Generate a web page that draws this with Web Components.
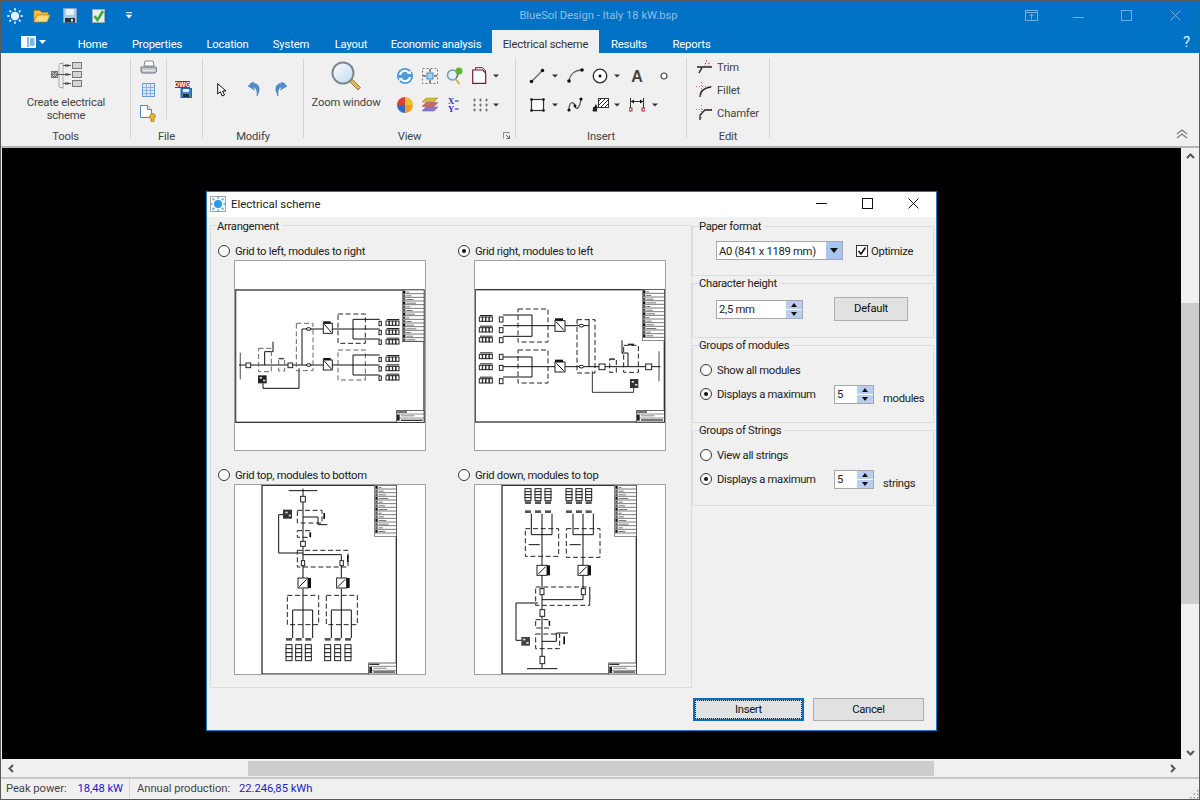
<![CDATA[<!DOCTYPE html>
<html><head><meta charset="utf-8"><title>BlueSol Design</title>
<style>
html,body{margin:0;padding:0;width:1200px;height:800px;overflow:hidden;background:#f0f0f0}
body{font:11.25px/14px Roboto,"Noto Sans",sans-serif;letter-spacing:-.16px;color:#333}
</style></head><body>
<bs-app></bs-app>
<script>
const sunRays=(c,w)=>{let s='';for(let i=0;i<8;i++){const a=i*Math.PI/4,x=Math.cos(a),y=Math.sin(a);s+=`<line x1="${(8+x*5.5).toFixed(1)}" y1="${(8+y*5.5).toFixed(1)}" x2="${(8+x*7.8).toFixed(1)}" y2="${(8+y*7.8).toFixed(1)}" stroke="${c}" stroke-width="${w}"/>`}return s};
const ICONS={
sun:[16,16,sunRays('#fff',1.6)+'<circle cx="8" cy="8" r="4.2" fill="#e6f4ff"/>'],
dsun:[16,16,'<rect x=".5" y=".5" width="15" height="15" fill="#f4f7f8" stroke="#a8a8a8"/>'+sunRays('#3fa4e6',1.4)+'<circle cx="8" cy="8" r="4" fill="#2b9be8"/>'],
folder:[18,14,'<path d="M1 3V1.5h6l1.5 2H15V6H4L1 13z" fill="#f2c244" stroke="#b88718" stroke-width=".7"/><path d="M1 13 4 6h13l-3 7z" fill="#fbdc78" stroke="#b88718" stroke-width=".7"/>'],
save:[14,15,'<path d="M.5.5h13v14H.5z" fill="#a9c9e8" stroke="#7fa4c8"/><rect x="3" y="1" width="8" height="6" fill="#e9f1f8"/><rect x="2" y="10" width="10" height="4.5" fill="#243240"/><rect x="8" y="11" width="2" height="2.5" fill="#ddd"/>'],
check:[13,14,'<rect x=".5" y=".5" width="12" height="13" fill="#e8eef0" stroke="#9ab"/><path d="M2.5 7 5.5 11 11 2" fill="none" stroke="#3eaa3c" stroke-width="2.6"/>'],
qat:[8,7,'<path d="M1 .7h6" stroke="#fff" fill="none"/><path d="M.8 2.8h6.4L4 6.4z" fill="#fff"/>'],
menu:[15,12,'<rect width="15" height="12" rx="1" fill="#fff"/><rect x="6.5" y="1" width="1" height="10" fill="#0072c6"/><path d="M9 3h4.500M9 5h4.500M9 7h4.500M9 9h4.500" stroke="#0072c6"/>'],
tri:[7,4,'<path d="M0 0h7L3.500 4z" fill="#fff"/>'],
dd:[6,4,'<path d="M0 .5h6L3 3.500z" fill="#333"/>'],
schemeBig:[31,30,'<g fill="none" stroke="#8a8a8a"><path d="M8 3.500V26M8.500 2.500H12M8.500 26.500H12" stroke="#a5a5a5"/><path d="M12 1V28" stroke="#aaa"/><path d="M7 13.500H20M12 4.500H20M12 22.500H20" stroke="#555"/><rect x="21.500" y="1.500" width="9" height="6" fill="#d4d4d4" stroke="#777"/><rect x="21.500" y="10.500" width="9" height="6" fill="#d4d4d4" stroke="#777"/><rect x="21.500" y="19.500" width="9" height="6" fill="#d4d4d4" stroke="#777"/></g><rect x="0" y="10" width="7" height="7" fill="#777"/><path d="M1 11l5 5M6 11l-5 5" stroke="#ccc"/><path d="M15 3v3M17 3v3M15 12v3M17 12v3M15 21v3M17 21v3" stroke="#444"/>'],
printer:[17,14,'<path d="M5 1h8l1 5H4z" fill="#fff" stroke="#888"/><path d="M1 7h15l1 4-2 2H2l-1-2z" fill="#c4c8cc" stroke="#6a7078"/><path d="M3 10.500h11" stroke="#eee"/>'],
table:[13,14,'<rect x=".5" y=".5" width="12" height="13" fill="#dbe9f7" stroke="#6e9bd0"/><path d="M4.500 1v12M8.500 1v12M1 4.500h11M1 7.500h11M1 10.500h11" stroke="#8cb3de"/>'],
dockey:[17,17,'<path d="M.5.5h7l4 4v8H.5z" fill="#fff" stroke="#5a86b8"/><path d="M7.500.500v4h4" fill="#dce8f4" stroke="#5a86b8"/><path d="M13 8.500a3 3 0 0 1 1 5.400V16.500h-3V14a3 3 0 0 1 2-5.500z" fill="#e8b530" stroke="#a87a10" stroke-width=".8"/>'],
dwg:[17,17,'<rect width="15" height="7" fill="#b82025"/><text x="7.500" y="6" font-family="Liberation Sans" font-size="6.500" font-weight="700" fill="#fff" text-anchor="middle" letter-spacing="0">DWG</text><rect x="6" y="7.500" width="10.500" height="9" fill="#3c86c8" stroke="#25669e"/><rect x="8" y="8" width="6" height="3" fill="#dfeefa"/><rect x="8" y="13" width="6" height="3" fill="#1e2e3e"/>'],
cursor:[10,14,'<path d="M.7.7V11l2.600-2.300L5.200 13l2.300-1L5.600 8H9z" fill="#fff" stroke="#111"/>'],
undo:[13,16,'<path d="M2 3C8 1 12 4 11 10L9 15C9.500 9 8 6 5 6L6.500 9 0 5 6 1z" fill="#4e8ed4" stroke="#30689f" stroke-width=".5"/>'],
redo:[13,16,'<path d="M11 3C5 1 1 4 2 10L4 15C3.500 9 5 6 8 6L6.500 9 13 5 7 1z" fill="#4e8ed4" stroke="#30689f" stroke-width=".5"/>'],
zoom:[30,30,'<defs><linearGradient id="g" x1="0" y1="0" x2="1" y2="1"><stop offset="0" stop-color="#fff"/><stop offset="1" stop-color="#bcd9ee"/></linearGradient></defs><path d="M18 20l9 9 2.500-2.500-9-9z" fill="#d9b65c" stroke="#9a8238"/><circle cx="12" cy="12" r="10.500" fill="url(#g)" stroke="#7d8890" stroke-width="2"/>'],
refresh:[18,18,'<circle cx="9" cy="9" r="8" fill="#4d9bdc"/><path d="M4 8a5 5 0 0 1 9-2M14 10a5 5 0 0 1-9 2" fill="none" stroke="#fff" stroke-width="2"/><path d="M11 7h4V3zM7 11H3v4z" fill="#fff"/>'],
fit:[16,16,'<rect x=".5" y=".5" width="15" height="15" fill="none" stroke="#777" stroke-dasharray="2 2"/><rect x="5" y="5" width="6" height="6" fill="#a8d2f0" stroke="#3d8bc8"/><path d="M8 1v3M8 12v3M1 8h3M12 8h3" stroke="#222"/>'],
zpin:[18,18,'<circle cx="6.500" cy="8" r="5" fill="#e2f0fa" stroke="#7d96aa" stroke-width="1.500"/><path d="M9.500 12l4 5" stroke="#d2b050" stroke-width="2"/><circle cx="13" cy="4" r="3.500" fill="#5fb432"/><path d="M12.500 7 10 11" stroke="#557" /> '],
page:[15,17,'<path d="M.7 3h10l3 3v10.300H.7z" fill="#fff" stroke="#7a1c2a" stroke-width="1.200"/><path d="M3.500 3V.7h7l3 3V6" fill="none" stroke="#7a1c2a"/>'],
pie:[16,16,'<path d="M8 8V0a8 8 0 0 1 8 8z" fill="#e8c42c"/><path d="M8 8h8a8 8 0 0 1-8 8z" fill="#f0a020"/><path d="M8 8v8a8 8 0 0 1-8-8z" fill="#2e6fc4"/><path d="M8 8H0a8 8 0 0 1 8-8z" fill="#d8403c"/>'],
layers:[16,15,'<path d="M4 1h12l-4 4H0z" fill="#d8b848" stroke="#a08428" stroke-width=".5"/><path d="M4 5.500h12l-4 4H0z" fill="#cc6a60" stroke="#a04840" stroke-width=".5"/><path d="M4 10h12l-4 4H0z" fill="#9078c8" stroke="#6a58a0" stroke-width=".5"/>'],
xy:[14,16,'<text font-family="Liberation Serif" font-size="8.500" font-weight="700" fill="#3030c0" letter-spacing="0"><tspan x="0" y="7">X=</tspan><tspan x="0" y="15">Y=</tspan></text>'],
dots:[16,14,'<path d="M1 2h3M2.500 .5v3M7 2h3M8.500 .5v3M13 2h3M14.500 .5v3M1 7h3M2.500 5.500v3M7 7h3M8.500 5.500v3M13 7h3M14.500 5.500v3M1 12h3M2.500 10.500v3M7 12h3M8.500 10.500v3M13 12h3M14.500 10.500v3" stroke="#777"/>'],
launch:[7,7,'<path d="M.5 6.500V.5h6" fill="none" stroke="#888"/><path d="M3 3l3.500 3.500M6.500 3.500v3h-3" fill="none" stroke="#666"/>'],
line:[16,16,'<path d="M2.500 13.500 13.500 2.500" stroke="#666" stroke-width="1.300"/><circle cx="2.500" cy="13.500" r="1.800" fill="#111"/><circle cx="13.500" cy="2.500" r="1.800" fill="#111"/>'],
arc:[17,15,'<path d="M2 13C3 6 8 2 15 2" stroke="#666" stroke-width="1.300" fill="none"/><circle cx="2" cy="13" r="1.800" fill="#111"/><circle cx="15" cy="2" r="1.800" fill="#111"/>'],
circle:[16,16,'<circle cx="8" cy="8" r="6.800" fill="#fff" stroke="#333" stroke-width="1.300"/><circle cx="8" cy="8" r="1.500" fill="#111"/>'],
bigA:[14,18,'<text x="7" y="15" font-family="Liberation Sans" font-size="16" font-weight="700" fill="#444" text-anchor="middle" letter-spacing="0">A</text>'],
point:[8,8,'<circle cx="4" cy="4" r="3" fill="#fff" stroke="#444" stroke-width="1.200"/>'],
rect:[15,14,'<rect x="1.500" y="1.500" width="12" height="11" fill="#fff" stroke="#333" stroke-width="1.200"/><circle cx="1.500" cy="1.500" r="1.300" fill="#111"/><circle cx="13.500" cy="1.500" r="1.300" fill="#111"/><circle cx="1.500" cy="12.500" r="1.300" fill="#111"/><circle cx="13.500" cy="12.500" r="1.300" fill="#111"/>'],
spline:[16,15,'<path d="M2 13C2 4 7 4 8 9S13 11 14 2" fill="none" stroke="#555" stroke-width="1.300"/><circle cx="2" cy="13" r="1.600" fill="#111"/><circle cx="14" cy="2" r="1.600" fill="#111"/><circle cx="8" cy="9" r="1.400" fill="#111"/>'],
hatch:[17,14,'<rect x="6.500" y=".5" width="10" height="9" fill="#fff" stroke="#333"/><path d="M7 3l3-3M7 7l7-7M9 9l7-7M13 9l3-3" stroke="#333"/><path d="M0 13 4 6l2 4z" fill="#222"/><rect x="1" y="9" width="4" height="4.500" fill="#222"/>'],
dim:[16,15,'<path d="M1.500 1v10M14.500 1v10M2 4.500h12" stroke="#333" fill="none"/><path d="M2 4.500 5 2.500v4zM14 4.500 11 2.500v4z" fill="#111"/><rect x="0" y="11" width="3" height="3" fill="none" stroke="#b02020"/><rect x="13" y="11" width="3" height="3" fill="none" stroke="#b02020"/>'],
trim:[17,15,'<path d="M1 8h15" stroke="#222" stroke-width="1.500"/><path d="M3 14 6 8.500" stroke="#222" stroke-width="1.500"/><path d="M8 8 11 1M13 8v-5" stroke="#b03030" stroke-dasharray="1.500 1.500" fill="none"/>'],
fillet:[17,16,'<path d="M0 4.500h16M5.500 0v15" stroke="#c07070" stroke-dasharray="1 2" fill="none"/><path d="M4 15C4 9 7 6 15 5" stroke="#222" stroke-width="1.300" fill="none"/>'],
chamfer:[17,16,'<path d="M0 4.500h16M5.500 0v15" stroke="#c07070" stroke-dasharray="1 2" fill="none"/><path d="M4 15V10L9 5h7" stroke="#222" stroke-width="1.300" fill="none"/>'],
wrestore:[13,11,'<rect x=".5" y=".5" width="12" height="10" fill="none" stroke="#6fb0e4"/><path d="M.5 2.500h12M6.500 9.500V4M4.500 6l2-2 2 2" stroke="#6fb0e4" fill="none"/>'],
wmin:[11,11,'<path d="M0 7.500h11" stroke="#6fb0e4"/>'],
wmax:[11,11,'<rect x=".5" y=".5" width="10" height="10" fill="none" stroke="#6fb0e4"/>'],
wclose:[11,11,'<path d="M.5.5l10 10M10.500.5l-10 10" stroke="#6fb0e4"/>'],
dmin:[11,11,'<path d="M0 5.500h11" stroke="#111"/>'],
dmax:[11,11,'<rect x=".5" y=".5" width="10" height="10" fill="none" stroke="#111"/>'],
dclose:[11,11,'<path d="M.5.5l10 10M10.500.5l-10 10" stroke="#111"/>'],
ribup:[12,10,'<path d="M1 5 6 1l5 4M1 9 6 5l5 4" fill="none" stroke="#777" stroke-width="1.200"/>'],
chU:[9,6,'<path d="M1 5 4.500 1.500 8 5" fill="none" stroke="#555" stroke-width="2"/>'],
chD:[9,6,'<path d="M1 1 4.500 4.500 8 1" fill="none" stroke="#555" stroke-width="2"/>'],
chL:[6,9,'<path d="M5 1 1.500 4.500 5 8" fill="none" stroke="#555" stroke-width="2"/>'],
chR:[6,9,'<path d="M1 1 4.500 4.500 1 8" fill="none" stroke="#555" stroke-width="2"/>'],
grip:[10,10,'<path d="M8 1h1.500v1.500H8zM4.500 4.500H6V6H4.500zM8 4.500h1.500V6H8zM1 8h1.500v1.500H1zM4.500 8H6v1.500H4.500zM8 8h1.500v1.500H8z" fill="#999"/>']
};
const def=(n,html,init)=>customElements.define(n,class extends HTMLElement{
 connectedCallback(){if(this.shadowRoot)return;const r=this.attachShadow({mode:'open'});r.innerHTML=typeof html==='function'?html(this):html;}
});
def('ui-icon',e=>{const [w,h,s]=ICONS[e.getAttribute('n')];
 return `<style>:host{display:inline-flex;align-items:center;justify-content:center;flex:none;line-height:0}</style><svg xmlns="http://www.w3.org/2000/svg" width="${w}" height="${h}" viewBox="0 0 ${w} ${h}">${s}</svg>`});
def('ui-radio',e=>`<style>:host{display:flex;align-items:center;gap:5px;height:20px;white-space:nowrap;color:#222}
slot{display:block;padding-top:2px}
i{width:12px;height:12px;box-sizing:border-box;border:1px solid #333;border-radius:50%;background:#fff;display:flex;align-items:center;justify-content:center;flex:none}
b{width:4px;height:4px;border-radius:50%;background:#111}</style><i>${e.hasAttribute('checked')?'<b></b>':''}</i><slot></slot>`);
const arrows=`<span class="ar"><u class="up"></u><u class="dn"></u></span>`;
def('ui-spin',e=>`<style>:host{display:flex;box-sizing:border-box;width:${e.getAttribute('w')}px;height:19px;border:1px solid #a8a8a8;background:#fff;color:#222;align-items:center;padding-left:2px;flex:none}
span.t{flex:1;white-space:nowrap;padding-top:2px}.ar{width:16px;height:17px;display:flex;flex-direction:column;gap:1px}
u{flex:1;background:#b8cdf0;display:flex;align-items:center;justify-content:center;text-decoration:none}
u::before{content:"";border-left:3.5px solid transparent;border-right:3.5px solid transparent}
.up::before{border-bottom:4px solid #111}.dn::before{border-top:4px solid #111}</style><span class="t">${e.getAttribute('v')}</span>${arrows}`);
def('ui-combo',e=>`<style>:host{display:flex;box-sizing:border-box;width:127px;height:19px;border:1px solid #a8a8a8;background:#fff;align-items:center;padding-left:2px;color:#222;flex:none}
span{flex:1;white-space:nowrap;padding-top:2px}u{width:16px;height:17px;background:#a8c4f0;display:flex;align-items:center;justify-content:center}
u::before{content:"";border:4px solid transparent;border-top:5px solid #111;border-bottom:0}</style><span><slot></slot></span><u></u>`);
def('ui-check',e=>`<style>:host{display:flex;align-items:center;gap:3px;color:#222;white-space:nowrap}
slot{display:block;padding-top:2px}
i{width:12px;height:12px;box-sizing:border-box;border:1px solid #333;background:#fff;line-height:0}</style><i><svg width="10" height="10" viewBox="0 0 10 10"><path d="M1.500 5 4 8 8.500 1.500" fill="none" stroke="#111" stroke-width="1.600"/></svg></i><slot></slot>`);
def('ui-btn',e=>`<style>:host{display:flex;box-sizing:border-box;align-items:center;justify-content:center;background:#e1e1e1;border:1px solid #adadad;color:#111;flex:none;position:relative}
:host([focus]){border:2px solid #0a6cc4}
:host([focus])::after{content:"";position:absolute;inset:0;border:1px dotted #111}</style><slot></slot>`);
def('group-box',e=>`<style>:host{display:block;box-sizing:border-box;border:1px solid #dcdcdc}
.lg{display:table;margin:var(--lg,-8px) 0 -1px 6px;height:15px;padding-top:1px;box-sizing:border-box;background:#f0f0f0;color:#222;padding-right:3px;white-space:nowrap}</style><div class="lg">${e.getAttribute('label')}</div><slot></slot>`);
/* diagrams: coordinates in 3x pixels */
const L=(d,c='#111',w=3)=>`<path d="${d}" fill="none" stroke="${c}" stroke-width="${w}"/>`;
const D=(x,y,w,h,c='#222')=>`<rect x="${x}" y="${y}" width="${w}" height="${h}" fill="none" stroke="${c}" stroke-width="3" stroke-dasharray="15 8"/>`;
const B=(x,y,w,h,f='#fff')=>`<rect x="${x}" y="${y}" width="${w}" height="${h}" fill="${f}" stroke="#222" stroke-width="3"/>`;
const F=(x,y,w,h,f='#111')=>`<rect x="${x}" y="${y}" width="${w}" height="${h}" fill="${f}"/>`;
const sheet=(x1,y1,x2,y2)=>`<rect x="${x1}" y="${y1}" width="${x2-x1}" height="${y2-y1}" fill="#fff" stroke="#333" stroke-width="4"/>`;
const table=(x1,y1,x2,y2)=>{let s=`<rect x="${x1}" y="${y1}" width="${x2-x1}" height="${y2-y1}" fill="#fff" stroke="#555" stroke-width="2"/>`;
 for(let y=y1+11,i=0;y<y2;y+=11,i++){s+=L(`M${x1} ${y}H${x2}`,'#333',2)+F(x1+2,y-9,7,8,i%3==0?'#111':'#555')+F(x1+12,y-6,8+(i*7%24),3,'#777')}return s};
const tb=(x1,y1,x2,y2)=>`<rect x="${x1}" y="${y1}" width="${x2-x1}" height="${y2-y1}" fill="#fff" stroke="#222" stroke-width="2"/>`+F(x1+2,y1+2,30,4,'#333')+L(`M${x1} ${y1+10}H${x2}M${x1} ${y1+22}H${x2}`,'#555',2)+F(x1+2,y1+12,8,18,'#222')+F(x1+14,y1+14,40,3,'#888')+F(x1+14,y2-8,x2-x1-18,4,'#333');
const inv=(x,y)=>B(x,y,27,30)+L(`M${x+3} ${y+3}L${x+24} ${y+27}`)+F(x,y-6,22,6);
const invV=(x,y)=>B(x,y,30,30)+L(`M${x+4} ${y+26}L${x+26} ${y+4}`)+F(x+30,y,9,30);
const modH=(x,y,n=4)=>{let s=F(x+2,y-6,n*9+2,3,'#222');for(let i=0;i<n;i++)s+=B(x+i*10,y,9,13);return s};
const modV=(x,y,h=48)=>{let s='';const n=4;for(let i=0;i<n;i++)s+=B(x,y+i*h/n,18,h/n);return s};
const thumbs={
d1:['91 213 570 567',sheet(92,300,658,697)+F(90,298,5,400,'#555')+table(593,300,658,455)+tb(575,662,658,697)
 +L('M107 488V568','#777',4)+L('M103 525H355')+B(124,519,14,14)+B(250,519,14,14)+L('M180 525V485H205M205 455V485')+D(162,475,38,70,'#666')
 +F(160,556,26,24,'#222')+F(165,561,7,5,'#ddd')+F(175,569,7,5,'#ddd')+L('M175 580V595H283V535')+D(222,505,18,38,'#666')+F(222,505,16,3,'#333')
 +D(275,400,50,142,'#666')+L('M292 525V417H355')+`<ellipse cx="312" cy="417" rx="7" ry="4" fill="#fff" stroke="#111" stroke-width="3"/><ellipse cx="312" cy="525" rx="7" ry="4" fill="#fff" stroke="#111" stroke-width="3"/>`
 +inv(356,400)+inv(356,510)+D(400,372,82,88)+D(400,480,82,90,'#666')
 +L('M382 417H525M445 388V447M445 388H525M445 447H525M382 525H525M445 495V555M445 495H525M445 555H525')
 +[400,427,456,508,536,564].map(y=>B(523,y-6,7,13)+modH(544,y-7)).join('')],
d2:['76 64 570 567',sheet(76,150,644,547)+F(74,148,5,400,'#555')+table(578,150,644,303)+tb(560,513,644,547)
 +L('M628 335V425','#777',4)+L('M632 381H346')+B(588,373,18,17)+B(448,373,18,17)+D(522,317,44,81)+L('M517 302V340H535V381M517 340H520')+F(535,312,18,5,'#222')
 +F(541,418,25,27,'#333')+F(546,424,7,5,'#ddd')+F(556,433,7,5,'#ddd')+L('M552 445V458H428V395','#333')+D(480,358,20,40)+F(480,357,16,3,'#333')
 +D(382,240,54,160)+L('M418 240V381M346 258H418')+`<ellipse cx="395" cy="258" rx="7" ry="4" fill="#fff" stroke="#111" stroke-width="3"/><ellipse cx="395" cy="381" rx="7" ry="4" fill="#fff" stroke="#111" stroke-width="3"/>`
 +B(316,243,30,32)+L('M320 247L342 271')+F(316,236,24,7)+B(316,367,30,30)+L('M320 371L342 393')+F(316,360,24,7)
 +D(205,208,90,99)+D(205,331,90,99)
 +L('M247 226V290M316 258H160M160 226H247M160 290H247M247 352V412M316 381H160M160 352H247M160 412H247')
 +[240,272,302,352,385,425].map(y=>B(149,y-8,11,15)+modH(89,y-8)).join('')],
d3:['61 61 570 567',sheet(142,62,545,628)+table(480,62,545,215)+tb(462,595,545,628)
 +L('M222 78H308')+L('M265 72V340')+B(258,95,14,17)+F(205,135,27,27,'#333')+F(212,141,7,5,'#ddd')+F(222,150,7,5,'#ddd')+D(248,137,74,38)+L('M265 157H310V180H338')+F(326,145,5,18)
 +D(248,198,40,20)+F(284,203,5,14)+B(258,230,14,15)+L('M205 150H192V265H265')+L('M265 270H380V340')+D(248,257,152,50)+F(397,272,5,20)
 +B(260,288,10,15)+B(376,288,10,15)+invV(250,340)+invV(366,340)+L('M265 372V520M380 372V520')
 +D(218,392,94,88)+D(335,392,93,88)+L('M234 436H294M234 436V520M294 436V520M350 436H410M350 436V520M410 436V520')
 +[214,243,272,330,360,391].map(x=>F(x,520,18,8,'#555')+modV(x,540)).join('')],
d4:['61 61 570 567',sheet(142,62,545,628)+table(480,62,545,215)+tb(462,595,545,628)
 +[211,241,271,334,364,393].map(x=>modV(x,72,36)+F(x,110,18,8,'#555')+F(x,137,18,8,'#555')).join('')
 +L('M230 147V210H292V147M262 147V302M355 147V210H416V147M385 147V302')+D(212,192,100,83)+D(335,192,101,86)
 +L('M222 240H255M345 240H378')+invV(247,302)+invV(370,302)+L('M262 332V610M385 332V405M262 405H385')+D(243,367,162,55)+B(256,372,12,18)+B(380,372,12,18)
 +F(403,368,4,44,'#555')+B(256,435,14,20)+L('M250 415H184V527H200')+F(200,517,26,26,'#444')+F(205,522,7,5,'#ddd')+F(215,532,7,5,'#ddd')
 +D(243,465,42,25)+F(282,468,4,14)+D(243,508,72,44)+L('M262 530H305V505H340')+F(326,515,5,24)+B(256,575,14,22)+L('M217 612H308')]
};
def('scheme-thumb',e=>{const [vb,s]=thumbs[e.getAttribute('k')];return `<style>:host{display:block;width:192px;height:191px;box-sizing:border-box;border:1px solid #a0a0a0;background:#fff;margin-left:16px;line-height:0}</style><svg width="190" height="189" viewBox="${vb}" xmlns="http://www.w3.org/2000/svg">${s}</svg>`});
def('rb-group',e=>`<style>:host{display:grid;grid-template-rows:74px 18px;height:93px;width:${e.getAttribute('w')}px;flex:none;box-sizing:border-box;
 background:linear-gradient(#d4d4d4,#d4d4d4) right 0 top 5px/1px 80px no-repeat;position:relative}
.l{text-align:center;color:#444;line-height:18px;padding:1px 1px 0 0;height:17px}
.c{min-width:0}</style><div class="c"><slot></slot></div><div class="l">${e.getAttribute('label')}<slot name="extra"></slot></div>`);
def('rb-grid',e=>`<style>:host{display:grid;grid-template-columns:${e.getAttribute('c')};grid-auto-rows:29px;align-items:center;justify-items:center}</style><slot></slot>`);
def('rb-tab',e=>`<style>:host{display:flex;align-items:center;justify-content:center;height:23px;width:${e.getAttribute('w')}px;color:#fff;flex:none;white-space:nowrap;padding-top:6px;box-sizing:border-box}
:host([on]){background:#f0f0f0;color:#333}</style><slot></slot>`);
def('bs-ribbon',`<style>:host{display:flex;height:93px;background:#f0f0f0;position:relative;border-bottom:2px solid #b4b4b4;color:#444}
.up{position:absolute;right:11px;bottom:7px}
.big{display:flex;flex-direction:column;align-items:center;text-align:center}
.g{display:flex}
.e{display:flex;align-items:center;height:23px;gap:4px;padding-left:9px}
.e span{color:#444;padding-top:2px}
.launch{position:absolute;right:6px;top:79px}
</style>
<rb-group w="130" label="Tools"><div class="big" style="padding-top:8px"><ui-icon n="schemeBig"></ui-icon><div style="margin-top:5px;line-height:13px">Create electrical<br>scheme</div></div></rb-group>
<rb-group w="72" label="File"><div class="g" style="padding-top:6px"><div style="display:flex;flex-direction:column;align-items:center;width:35px;border-right:1px solid #d4d4d4;height:60px"><ui-icon n="printer" style="margin-top:1px"></ui-icon><ui-icon n="table" style="margin-top:9px"></ui-icon><ui-icon n="dockey" style="margin-top:8px"></ui-icon></div><ui-icon n="dwg" style="margin:22px 0 0 8px;align-self:flex-start"></ui-icon></div></rb-group>
<rb-group w="101" label="Modify"><div class="g" style="padding:29px 0 0 14px"><ui-icon n="cursor"></ui-icon><ui-icon n="undo" style="margin-left:21px;margin-top:-1px"></ui-icon><ui-icon n="redo" style="margin-left:13px;margin-top:-1px"></ui-icon></div></rb-group>
<rb-group w="212" label="View"><div class="g" style="padding-top:8px"><div class="big" style="width:84px"><ui-icon n="zoom"></ui-icon><div style="margin-top:5px;line-height:13px">Zoom window</div></div>
<rb-grid c="25px 25px 25px 25px 8px" style="margin-left:4px"><ui-icon n="refresh"></ui-icon><ui-icon n="fit"></ui-icon><ui-icon n="zpin"></ui-icon><ui-icon n="page"></ui-icon><ui-icon n="dd"></ui-icon><ui-icon n="pie"></ui-icon><ui-icon n="layers"></ui-icon><ui-icon n="xy"></ui-icon><ui-icon n="dots"></ui-icon><ui-icon n="dd"></ui-icon></rb-grid></div>
<div slot="extra" class="launch"><ui-icon n="launch"></ui-icon></div></rb-group>
<rb-group w="171" label="Insert"><rb-grid c="26px 10px 30px 20px 14px 26px 10px 8px" style="padding:8px 0 0 8px"><ui-icon n="line"></ui-icon><ui-icon n="dd"></ui-icon><ui-icon n="arc"></ui-icon><ui-icon n="circle"></ui-icon><ui-icon n="dd"></ui-icon><ui-icon n="bigA"></ui-icon><i></i><ui-icon n="point"></ui-icon>
<ui-icon n="rect"></ui-icon><ui-icon n="dd"></ui-icon><ui-icon n="spline"></ui-icon><ui-icon n="hatch"></ui-icon><ui-icon n="dd"></ui-icon><ui-icon n="dim"></ui-icon><ui-icon n="dd"></ui-icon><i></i></rb-grid></rb-group>
<rb-group w="83" label="Edit"><div style="padding-top:2px"><div class="e"><ui-icon n="trim"></ui-icon><span>Trim</span></div><div class="e"><ui-icon n="fillet"></ui-icon><span>Fillet</span></div><div class="e"><ui-icon n="chamfer"></ui-icon><span>Chamfer</span></div></div></rb-group>
<ui-icon n="ribup" class="up"></ui-icon>`);
def('bs-dialog',`<style>:host{position:absolute;left:204px;top:43px;width:731px;height:540px;box-sizing:border-box;border:1px solid #1a78c8;background:#f0f0f0;color:#222;display:block;font-size:11.25px;letter-spacing:-.3px}
.tb{height:25px;background:#fff;display:flex;align-items:center;padding:0 0 2px 3px;box-sizing:border-box;color:#222}
.tb span{margin-left:5px;flex:1;font-size:11.4px;letter-spacing:0}
.wb{width:46px;display:flex;justify-content:center}
.body{display:grid;grid-template-columns:482px 242px;padding:8px 0 0 3px}
.rt{display:flex;flex-direction:column;margin-top:1px}
.arr{display:grid;grid-template-columns:240px 240px;align-content:start;row-gap:14px;padding:8px 0 0 7px;box-sizing:border-box}
.arr ui-radio{height:19px}
.row{display:flex;align-items:center}
.rad{padding:8px 0 0 7px}
.btns{display:flex;justify-content:flex-end;gap:9px;padding:10px 12px 0 0}
.lab{margin:8px 0 -2px 9px}
.rad ui-radio+div{margin-top:4px}
</style>
<div class="tb"><ui-icon n="dsun"></ui-icon><span>Electrical scheme</span><div class="wb"><ui-icon n="dmin"></ui-icon></div><div class="wb"><ui-icon n="dmax"></ui-icon></div><div class="wb"><ui-icon n="dclose"></ui-icon></div></div>
<div class="body">
<group-box label="Arrangement" style="height:463px;--lg:-7px"><div class="arr">
<div><ui-radio>Grid to left, modules to right</ui-radio><scheme-thumb k="d1"></scheme-thumb></div>
<div><ui-radio checked>Grid right, modules to left</ui-radio><scheme-thumb k="d2"></scheme-thumb></div>
<div><ui-radio>Grid top, modules to bottom</ui-radio><scheme-thumb k="d3"></scheme-thumb></div>
<div><ui-radio>Grid down, modules to top</ui-radio><scheme-thumb k="d4"></scheme-thumb></div>
</div></group-box>
<div class="rt">
<group-box label="Paper format" style="height:50px;margin-bottom:7px"><div class="row" style="padding:8px 0 0 23px;gap:13px"><ui-combo>A0 (841 x 1189 mm)</ui-combo><ui-check>Optimize</ui-check></div></group-box>
<group-box label="Character height" style="height:55px;margin-bottom:7px"><div class="row" style="padding:7px 0 0 23px;gap:31px"><ui-spin w="87" v="2,5 mm"></ui-spin><ui-btn style="width:74px;height:24px">Default</ui-btn></div></group-box>
<group-box label="Groups of modules" style="height:78px;margin-bottom:7px"><div class="rad"><ui-radio>Show all modules</ui-radio><div class="row"><ui-radio checked style="width:134px">Displays a maximum</ui-radio><ui-spin w="40" v="5"></ui-spin><span class="lab">modules</span></div></div></group-box>
<group-box label="Groups of Strings" style="height:76px"><div class="rad"><ui-radio>View all strings</ui-radio><div class="row"><ui-radio checked style="width:134px">Displays a maximum</ui-radio><ui-spin w="40" v="5"></ui-spin><span class="lab">strings</span></div></div></group-box>
</div></div>
<div class="btns"><ui-btn focus style="width:111px;height:23px">Insert</ui-btn><ui-btn style="width:111px;height:23px">Cancel</ui-btn></div>`);
def('bs-app',`<style>:host{display:flex;flex-direction:column;width:1200px;height:800px;box-sizing:border-box;border:1px solid #5a5a5a;background:#f0f0f0}
.title{height:29px;background:#0072c6;display:flex;align-items:center;position:relative;flex:none}
.ttl{flex:1;text-align:center;color:#8ebfe8;padding-right:2px;margin-left:-1px;letter-spacing:-.03px}
.wbtns{position:absolute;right:0;top:0;height:29px;display:flex;align-items:center}
.qat{display:flex;align-items:center;padding-left:6px;width:400px;position:absolute;left:0;top:0;height:29px}
.tabs{height:23px;background:#0072c6;display:flex;flex:none;align-items:flex-end;position:relative}
.mn{width:65px;display:flex;align-items:center;padding-left:20px;gap:3px;box-sizing:border-box;height:23px;flex:none}
.help{position:absolute;right:9px;top:2px;color:#dff0ff;font-size:15px;line-height:20px}
.mid{flex:1;display:flex;min-height:0;padding-left:1px;background:#f0f0f0}
.canvas{flex:1;background:#000;position:relative;margin-bottom:1px}
.vs{width:18px;display:flex;flex-direction:column;align-items:center;padding:5px 0 4px;box-sizing:border-box;justify-content:space-between;flex:none}
.vt{width:18px;height:301px;background:#cdcdcd;position:absolute;right:1px;top:303px}
.hs{height:17px;display:flex;align-items:center;position:relative;flex:none;padding:0 23px 0 7px;justify-content:space-between;box-sizing:border-box}
.ht{position:absolute;left:247px;width:686px;top:1px;height:15px;background:#cdcdcd}
.st{height:20px;border-top:2px solid #c8c8c8;display:flex;align-items:flex-start;flex:none;position:relative;background:#f0f0f0;color:#444;letter-spacing:-.06px}
.st b{font-weight:400;color:#1c1cc8;padding-top:1px}
.st span{padding-top:1px}
.c1{width:129px;height:19px;box-sizing:border-box;border-right:1px solid #d4d4d4;display:flex;align-items:center;padding-left:5px;justify-content:space-between;padding-right:6px}
.c2{display:flex;align-items:center;padding-left:7px;height:19px}
.c2 span{width:102px}
.grip{position:absolute;right:0;bottom:0}
</style>
<div class="title"><div class="qat"><ui-icon n="sun"></ui-icon><ui-icon n="folder" style="margin-left:10px"></ui-icon><ui-icon n="save" style="margin-left:12px"></ui-icon><ui-icon n="check" style="margin-left:15px"></ui-icon><ui-icon n="qat" style="margin-left:20px"></ui-icon></div>
<div class="ttl">BlueSol Design - Italy 18 kW.bsp</div>
<div class="wbtns"><ui-icon n="wrestore" style="margin-right:35px"></ui-icon><ui-icon n="wmin" style="margin-right:37px"></ui-icon><ui-icon n="wmax" style="margin-right:38px"></ui-icon><ui-icon n="wclose" style="margin-right:18px"></ui-icon></div></div>
<div class="tabs"><div class="mn"><ui-icon n="menu"></ui-icon><ui-icon n="tri"></ui-icon></div>
<rb-tab w="53">Home</rb-tab><rb-tab w="76">Properties</rb-tab><rb-tab w="65">Location</rb-tab><rb-tab w="62">System</rb-tab><rb-tab w="58">Layout</rb-tab><rb-tab w="112">Economic analysis</rb-tab><rb-tab w="107" on>Electrical scheme</rb-tab><rb-tab w="60">Results</rb-tab><rb-tab w="65">Reports</rb-tab><div class="help">?</div></div>
<bs-ribbon></bs-ribbon>
<div class="mid"><div class="canvas"><bs-dialog></bs-dialog></div><div class="vs"><ui-icon n="chU"></ui-icon><ui-icon n="chD"></ui-icon></div><div class="vt"></div></div>
<div class="hs"><ui-icon n="chL"></ui-icon><div class="ht"></div><ui-icon n="chR"></ui-icon></div>
<div class="st"><div class="c1"><span>Peak power:</span><b>18,48 kW</b></div><div class="c2"><span>Annual production:</span><b>22.246,85 kWh</b></div><ui-icon n="grip" class="grip"></ui-icon></div>`);
</script>
</body></html>]]>
